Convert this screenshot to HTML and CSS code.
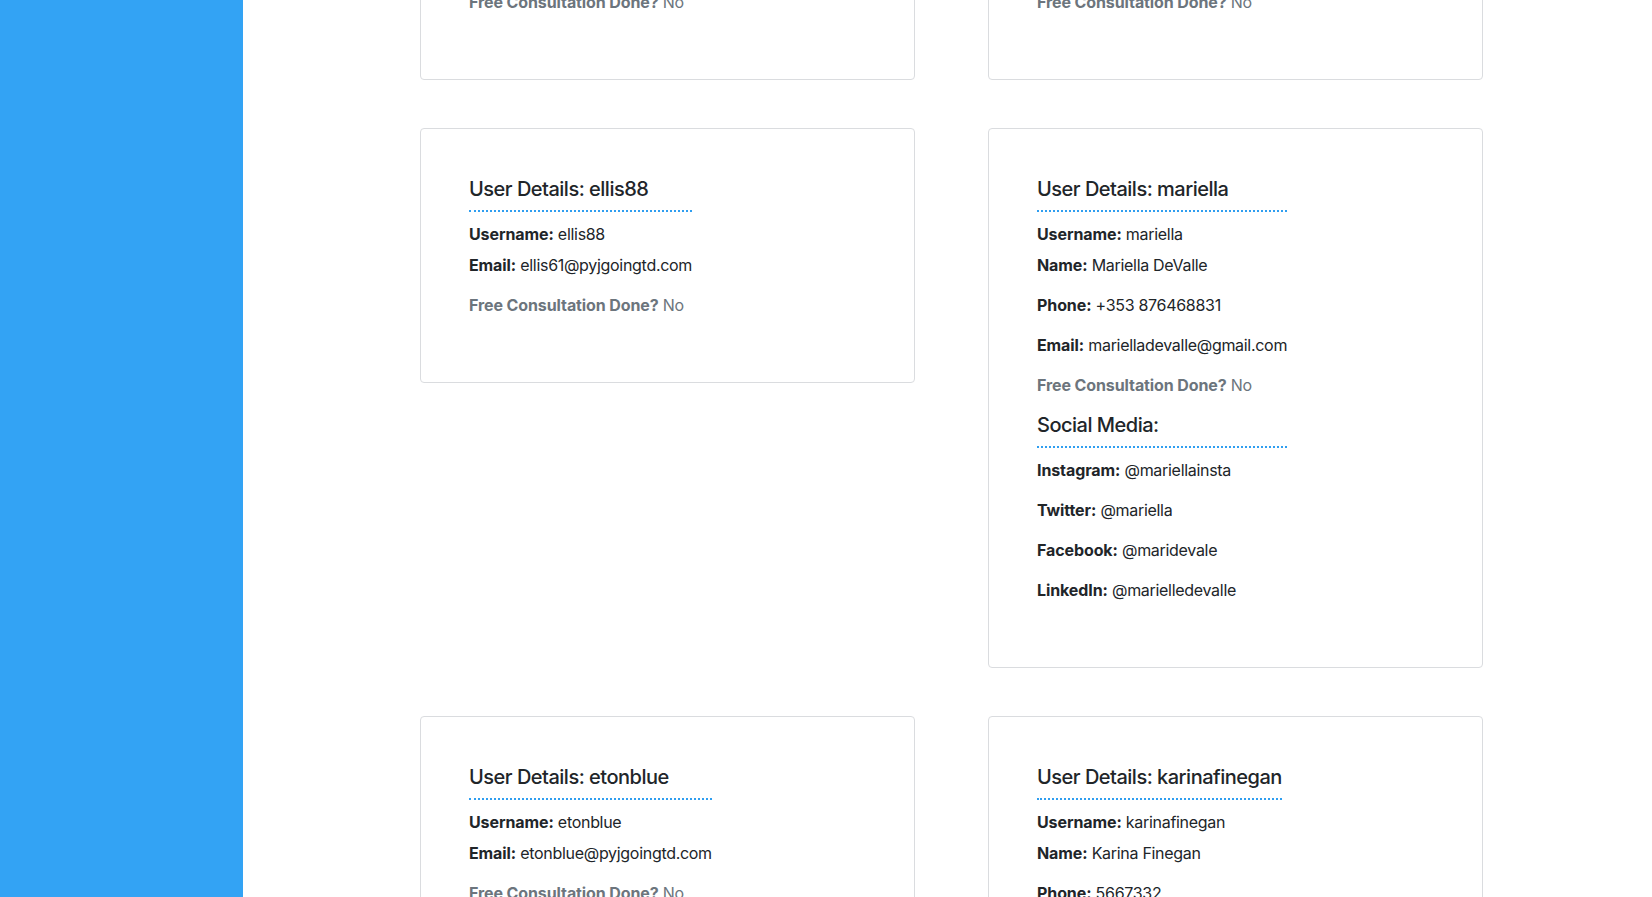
FILE: index.html
```html
<!DOCTYPE html>
<html lang="en">
<head>
<meta charset="utf-8">
<title>Users</title>
<link rel="stylesheet" href="styles.css">
</head>
<body>
<div class="app">
  <aside class="sidebar"></aside>
  <main class="main">
    <div class="content">
      <div class="cards">
        <div class="card">
          <div class="details">
            <h5 class="section-title">User Details: jamesoc</h5>
            <p class="field first"><strong>Username:</strong> jamesoc</p>
            <p class="field"><strong>Email:</strong> jamesoc@pyjgoingtd.com</p>
            <p class="field muted"><strong>Free Consultation Done?</strong> No</p>
          </div>
        </div>
        <div class="card">
          <div class="details">
            <h5 class="section-title">User Details: aoifeb</h5>
            <p class="field first"><strong>Username:</strong> aoifeb</p>
            <p class="field"><strong>Email:</strong> aoifeb@pyjgoingtd.com</p>
            <p class="field muted"><strong>Free Consultation Done?</strong> No</p>
          </div>
        </div>

        <div class="card">
          <div class="details">
            <h5 class="section-title">User Details: ellis88</h5>
            <p class="field first"><strong>Username:</strong> ellis88</p>
            <p class="field"><strong>Email:</strong> ellis61@pyjgoingtd.com</p>
            <p class="field muted"><strong>Free Consultation Done?</strong> No</p>
          </div>
        </div>
        <div class="card">
          <div class="details">
            <h5 class="section-title">User Details: mariella</h5>
            <p class="field first"><strong>Username:</strong> mariella</p>
            <p class="field"><strong>Name:</strong> Mariella DeValle</p>
            <p class="field"><strong>Phone:</strong> +353 876468831</p>
            <p class="field"><strong>Email:</strong> marielladevalle@gmail.com</p>
            <p class="field muted"><strong>Free Consultation Done?</strong> No</p>
            <h5 class="section-title">Social Media:</h5>
            <p class="field"><strong>Instagram:</strong> @mariellainsta</p>
            <p class="field"><strong>Twitter:</strong> @mariella</p>
            <p class="field"><strong>Facebook:</strong> @maridevale</p>
            <p class="field"><strong>LinkedIn:</strong> @marielledevalle</p>
          </div>
        </div>

        <div class="card">
          <div class="details">
            <h5 class="section-title">User Details: etonblue</h5>
            <p class="field first"><strong>Username:</strong> etonblue</p>
            <p class="field"><strong>Email:</strong> etonblue@pyjgoingtd.com</p>
            <p class="field muted"><strong>Free Consultation Done?</strong> No</p>
          </div>
        </div>
        <div class="card">
          <div class="details">
            <h5 class="section-title">User Details: karinafinegan</h5>
            <p class="field first"><strong>Username:</strong> karinafinegan</p>
            <p class="field"><strong>Name:</strong> Karina Finegan</p>
            <p class="field"><strong>Phone:</strong> 5667332</p>
            <p class="field"><strong>Email:</strong> karina@finegan.ie</p>
            <p class="field muted"><strong>Free Consultation Done?</strong> No</p>
          </div>
        </div>
      </div>
    </div>
  </main>
</div>
</body>
</html>
```
FILE: styles.css
```css
* { box-sizing: border-box; }

html, body {
  margin: 0;
  padding: 0;
  height: 100%;
}

body {
  font-family: Inter, "Liberation Sans", sans-serif;
  font-size: 16px;
  line-height: 1.5;
  letter-spacing: -0.3px;
  color: #212529;
  background: #fff;
}

.app {
  display: flex;
  height: 100vh;
  overflow: hidden;
}

.sidebar {
  flex: 0 0 243px;
  background: #33a3f4;
}

.main {
  flex: 1 1 auto;
  overflow: hidden;
  padding: 0 169px 0 177px;
}

.content {
  margin-top: -175px;
}

.cards {
  display: grid;
  grid-template-columns: 1fr 1fr;
  column-gap: 73px;
  row-gap: 48px;
  align-items: start;
}

.card {
  border: 1px solid #dadcdf;
  border-radius: 4px;
  padding: 48px 48px 49px;
  background: #fff;
}

.details {
  display: inline-block;
}

.section-title {
  margin: 0 0 10px;
  padding-bottom: 9px;
  border-bottom: 2px dotted #2f9ef0;
  font-size: 20px;
  font-weight: 500;
  line-height: 1.2;
  letter-spacing: -0.5px;
}

.field {
  margin: 0 0 16px;
  white-space: nowrap;
}

.field.first {
  margin-bottom: 7px;
}

.field strong {
  font-weight: 700;
  letter-spacing: -0.1px;
}

.muted {
  color: #6c757d;
}
```
